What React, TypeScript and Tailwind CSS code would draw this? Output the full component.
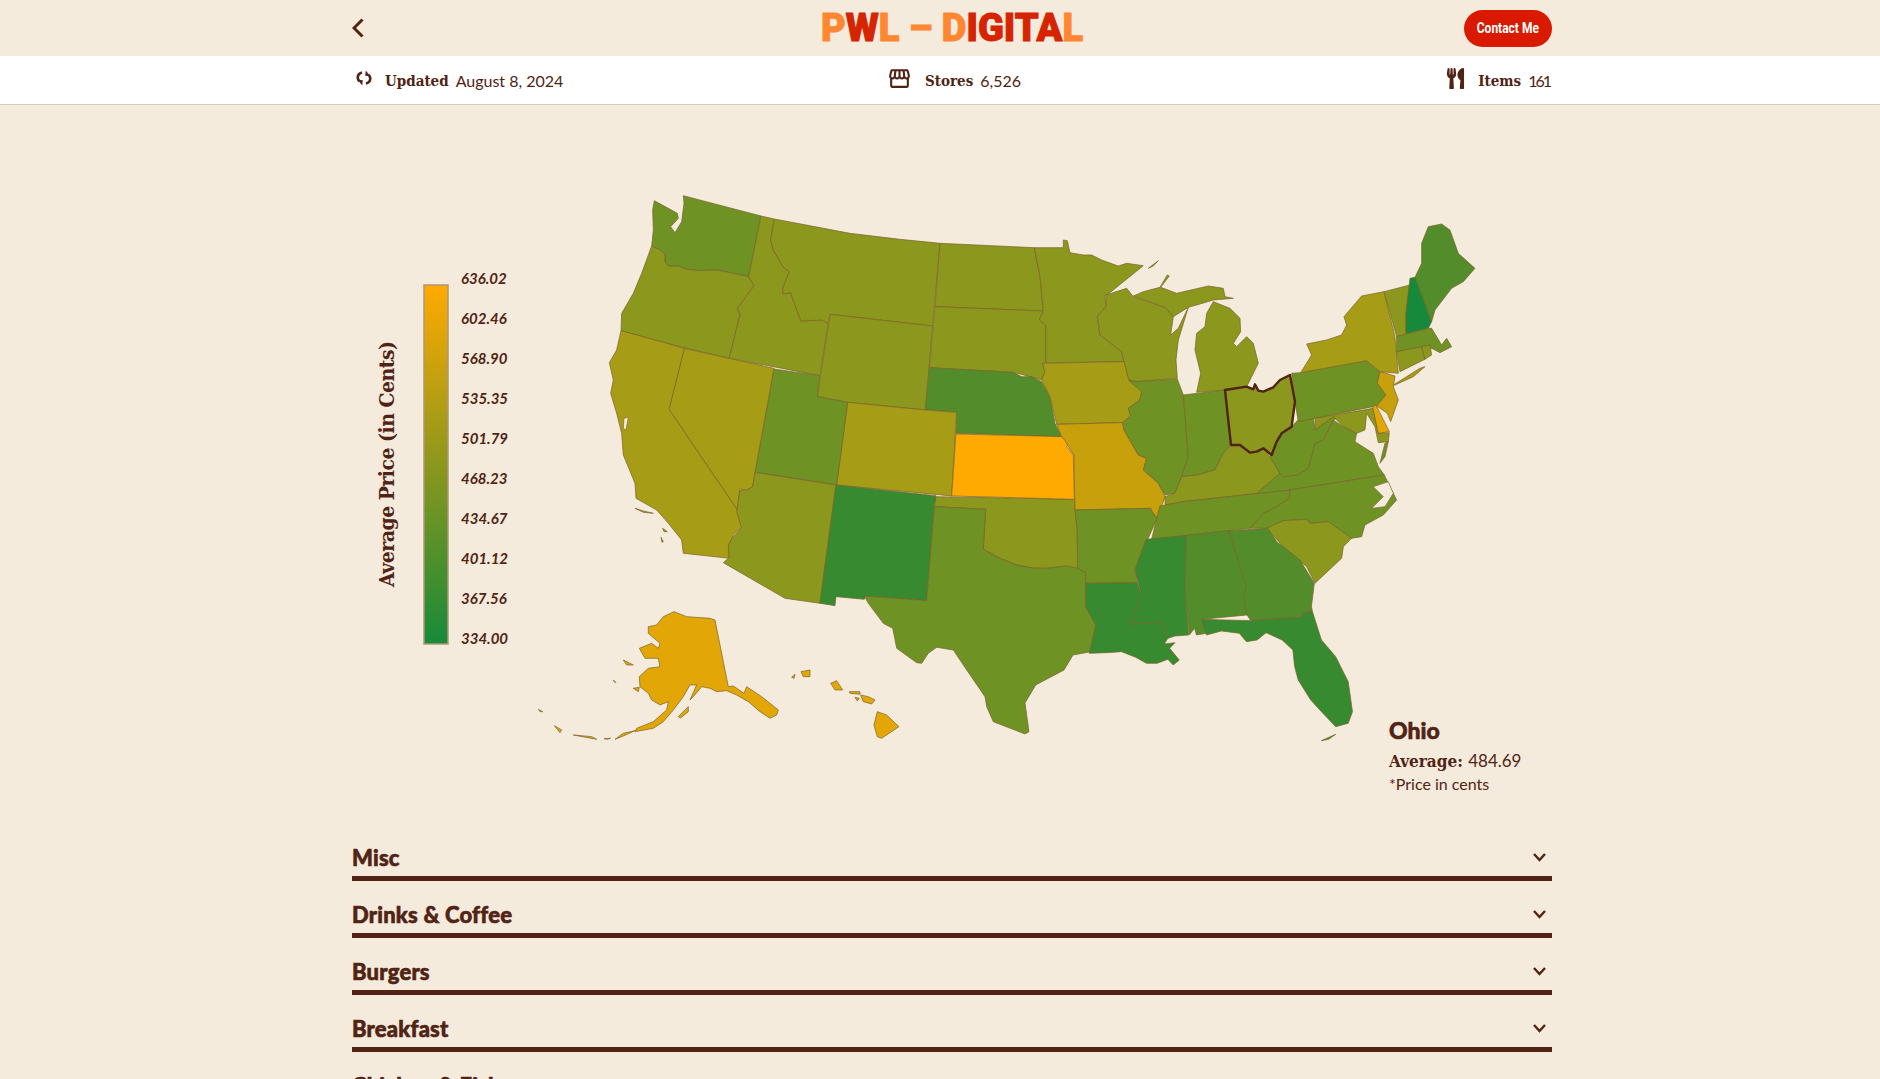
import React from "react";
import { FaUtensils } from "react-icons/fa";
import { MdOutlineStorefront } from "react-icons/md";

const BG = "#f5ebdc";
const C = {
  orange: "#ffaa00",
  amber: "#e2a707",
  gold: "#c7a00b",
  olive: "#a69c15",
  moss: "#8c971d",
  leaf: "#6e9224",
  green: "#538c2a",
  forest: "#378a30",
  teal: "#168a3a",
};

// each group holds outlines traced at its own scale, so they get their own transform
const west: [string, string][] = [
  [C.leaf, "250,47 483,108 446,290 400,280 350,270 300,272 260,268 235,258 205,258 195,245 195,222 178,208 155,198 160,150 158,90 163,62 205,85 232,100 235,115 212,140 225,158 245,125 252,70"],
  [C.moss, "155,198 178,208 195,222 195,245 205,258 235,258 260,268 300,272 350,270 400,280 446,290 462,318 412,385 420,403 388,535 250,503 63,452 65,400 100,340 125,280"],
  [C.moss, "483,108 523,117 512,180 520,210 550,262 568,275 548,325 550,342 572,338 590,390 603,423 665,420 685,430 660,587 388,535 420,403 412,385 462,318 446,290"],
  [C.moss, "523,117 750,160 900,178 1020,190 998,438 690,403 685,430 665,420 603,423 590,390 572,338 550,342 548,325 568,275 550,262 520,210 512,180"],
  [C.moss, "690,403 998,438 976,690 743,667 652,650"],
  [C.moss, "1020,190 1303,203 1310,240 1320,290 1330,393 1005,380"],
  [C.moss, "1005,380 1330,393 1318,420 1337,435 1337,548 1328,550 1335,575 1325,600 1290,590 1240,577 988,563"],
  [C.green, "988,563 1240,577 1265,590 1295,590 1325,605 1350,650 1365,730 1385,770 1068,760 1070,697 976,690"],
  [C.olive, "743,667 976,690 1070,697 1055,948 710,915"],
  [C.leaf, "522,567 660,587 652,650 743,667 710,915 465,877"],
  [C.olive, "253,505 522,565 465,877 458,920 440,935 420,925 412,990 207,688"],
  [C.olive, "63,452 253,505 207,688 412,990 428,1040 400,1065 385,1100 388,1135 250,1120 245,1080 205,1030 170,990 108,955 105,910 70,825 65,760 50,700 32,640 40,600 28,548 50,510"],
  [C.olive, "105,985 130,993 160,1000 130,997"],
  [C.olive, "188,1045 202,1055 192,1055"],
  [C.olive, "183,1072 190,1085 186,1087"],
  [BG, "72,715 85,712 78,750 70,745"],
  [C.moss, "1007,950 1423,958 1432,1040 1433,1170 1400,1158 1340,1165 1300,1165 1250,1155 1200,1135 1150,1108 1157,988 1005,980"],
  [C.orange, "1068,762 1385,770 1408,790 1400,800 1420,825 1423,958 1055,948"],
];

const east: [string, string][] = [
  [C.moss, "-47,143 40,143 40,120 52,122 60,158 100,165 125,165 155,180 205,198 230,190 280,197 175,282 165,285 168,320 142,350 150,405 215,455 222,485 -13,488 -13,375 -32,360 -20,333 -30,230 -40,180"],
  [C.moss, "295,205 325,182 310,198"],
  [C.moss, "168,285 230,265 250,290 345,322 370,350 362,405 385,385 415,322 385,420 378,480 382,535 258,545 235,540 222,485 215,455 150,405 142,350 168,320"],
  [C.moss, "250,288 280,275 330,262 352,225 358,228 332,262 380,280 475,258 520,265 525,290 550,295 490,300 440,315 415,322 370,350 345,322"],
  [C.moss, "490,305 540,325 570,355 572,395 550,430 560,440 590,410 610,430 625,490 605,530 590,560 525,570 440,577 452,520 435,450 440,400 465,380 470,340"],
  [C.olive, "-22,490 222,485 235,535 275,575 270,600 235,625 242,648 218,668 20,673 0,590 -25,540 -15,515"],
  [C.gold, "20,673 218,668 222,690 265,765 290,775 280,810 325,850 345,890 325,950 290,952 305,925 75,930 72,765 55,740 45,722 35,710"],
  [C.leaf, "258,545 382,537 400,585 415,770 395,830 375,880 345,885 325,850 280,810 290,775 265,765 222,690 218,668 242,648 235,625 270,600 275,575 235,540"],
  [C.leaf, "400,585 525,570 543,735 520,760 495,810 440,825 395,830 415,770"],
  [C.moss, "345,890 375,880 395,830 440,825 495,810 520,760 545,735 570,735 600,758 640,745 660,770 690,820 620,881 400,905 345,915"],
  [C.leaf, "330,918 400,905 720,870 718,895 680,920 640,940 600,985 305,1018 320,955"],
  [C.leaf, "620,881 690,820 700,830 745,825 775,805 795,730 820,720 850,660 880,680 920,700 915,725 970,760 985,800 1003,825 720,870"],
  [C.leaf, "990,790 1005,730 1015,725 1005,770"],
  [C.leaf, "660,770 680,725 695,700 725,680 742,662 790,655 795,690 850,650 870,650 850,660 820,720 795,730 775,805 745,825 700,830 690,820"],
  [C.leaf, "1003,825 720,870 718,895 680,920 640,940 600,985 650,985 700,962 770,958 780,970 835,965 905,1015 935,1010 945,975 1000,945 1040,900 1020,860"],
  [BG, "970,860 1015,845 1030,880 1005,920 965,925 1000,890"],
  [C.moss, "650,985 700,962 770,958 780,970 835,965 905,1015 880,1040 875,1075 795,1150 770,1100 700,1040"],
  [C.leaf, "725,520 752,518 950,482 990,515 982,550 1008,585 980,618 745,665 735,605"],
  [C.olive, "752,518 785,465 770,432 830,420 875,405 890,375 882,350 935,288 1002,275 1035,410 1045,520 990,515 950,482"],
  [C.olive, "1030,555 1110,505 1125,500 1090,530 1035,555"],
  [C.gold, "990,515 1035,528 1030,560 1045,600 1022,665 1012,640 980,618 1008,585 982,550"],
  [C.moss, "795,655 970,625 985,700 1018,698 1015,725 985,728 975,680 950,640 945,690 920,700 880,680 850,650 795,690"],
  [C.amber, "968,620 978,615 1018,695 985,700"],
  [C.moss, "1002,275 1080,255 1068,340 1068,402 1040,410"],
  [C.green, "1095,232 1115,190 1115,130 1135,80 1175,72 1200,90 1225,160 1275,205 1240,245 1205,265 1155,330 1145,365"],
  [C.teal, "1080,235 1095,232 1145,365 1135,385 1068,402 1068,340"],
  [C.leaf, "1040,410 1135,385 1145,385 1175,435 1190,415 1205,440 1170,458 1145,445 1040,455"],
  [C.moss, "1040,455 1115,440 1125,478 1050,515"],
  [C.moss, "1115,440 1140,435 1145,465 1125,478"],
];

const ohio = "525,570 590,560 610,568 615,553 625,572 640,575 670,562 690,540 720,525 735,605 725,680 695,700 680,725 665,765 640,745 620,755 600,758 570,735 543,735";

const south: [string, string][] = [
  [C.leaf, "210,30 420,25 440,55 415,115 405,130 378,210 385,248 240,250 240,218 218,205 216,90"],
  [C.forest, "240,250 385,248 397,288 363,372 455,368 470,415 460,432 490,428 475,445 502,480 485,495 470,478 440,490 410,490 380,472 340,455 300,458 250,460 268,375 240,320"],
  [C.forest, "410,118 522,106 518,260 528,405 490,408 470,415 455,368 363,372 397,288 378,210 405,130"],
  [C.green, "522,106 640,92 690,260 682,290 692,345 565,358 578,400 550,405 545,385 530,405 518,260"],
  [C.green, "640,92 750,85 775,125 840,180 880,250 872,320 875,335 848,338 845,352 702,362 692,345 682,290 690,260"],
  [C.forest, "565,358 702,362 845,352 848,338 875,335 900,420 940,470 975,545 987,635 975,670 940,680 900,635 870,600 835,540 825,500 820,450 790,420 745,398 720,420 690,425 670,400 620,393 578,405"],
  [C.forest, "900,722 940,703 920,718"],
];

const islands: [string, string][] = [
  [C.moss, "705,-23 948,15 900,370 795,355 610,248 628,232 625,195 640,170 665,145 650,95 660,30 680,30 698,20"],
  [C.forest, "948,15 1248,47 1243,80 1220,362 1035,348 1033,358 948,350 945,377 900,370"],
  [C.amber, "462,395 500,410 570,415 585,420 625,620 640,618 672,640 680,620 725,650 775,690 770,705 750,715 720,695 685,665 650,645 620,632 590,635 570,625 545,620 520,650 510,660 530,615 510,615 490,650 460,690 430,725 400,745 345,755 350,745 400,725 440,690 445,665 420,675 395,660 385,640 360,620 358,590 385,565 420,560 415,535 375,535 358,505 395,490 415,505 420,490 385,460 385,440 410,435 430,410"],
  [C.amber, "475,710 505,680 505,695 480,715"],
  [C.amber, "345,752 310,768 285,778 310,760"],
  [C.amber, "160,765 230,778 215,770"],
  [C.amber, "252,776 272,775 262,778"],
  [C.amber, "103,737 125,750 120,758"],
  [C.amber, "55,688 68,695 60,695"],
  [C.amber, "310,540 340,555 320,555"],
  [C.amber, "340,625 358,622 355,635"],
  [C.amber, "280,600 288,608 283,606"],
  [C.amber, "1072,695 1100,705 1137,740 1085,775 1072,770 1062,735"],
  [C.amber, "1022,645 1045,650 1065,660 1055,672 1030,665"],
  [C.amber, "988,635 1020,635 1020,643 990,640"],
  [C.amber, "1005,652 1018,655 1012,663"],
  [C.amber, "932,610 950,602 968,630 945,630"],
  [C.amber, "843,575 870,570 870,590 850,590"],
  [C.amber, "815,592 825,583 822,595"],
];

const texas =
  "935,506.7 985.7,509.3 983.3,549.3 1000,558.3 1016.7,565 1033,568 1046.7,568.3 1066.7,566 1077.9,568.3 1085.7,572.7 1085.7,606.7 1095.7,625 1091,651.7 1073,655 1064,670 1035.7,685 1025,703 1029,731.7 1025,734 993.3,721.7 986.7,706.7 985,696.7 966.7,670 953.3,650 936.7,647.3 928.3,653.3 921.7,663.3 916.7,662.7 896.7,648.3 892.7,628.3 883.3,623.3 868.3,603.3 864.3,596 926.7,600.7 934.3,506.7";

const ticks = ["636.02", "602.46", "568.90", "535.35", "501.79", "468.23", "434.67", "401.12", "367.56", "334.00"];
const sections = ["Misc", "Drinks & Coffee", "Burgers", "Breakfast", "Chicken & Fish"];

function Shapes({ items }: { items: [string, string][] }) {
  return (
    <>
      {items.map(([fill, points], i) => (
        <polygon
          key={i}
          points={points}
          fill={fill}
          stroke={fill === BG ? "#8a6d3a" : "#7a6128"}
          strokeWidth={0.7}
          strokeLinejoin="round"
          vectorEffect="non-scaling-stroke"
        />
      ))}
    </>
  );
}

function PriceMap() {
  return (
    <svg viewBox="352 105 1200 719" className="block w-[1200px] h-[719px]">
      <defs>
        <linearGradient id="scale" x1="0" y1="0" x2="0" y2="1">
          <stop offset="0%" stopColor="#ffaa00" />
          <stop offset="50%" stopColor="#8c971d" />
          <stop offset="100%" stopColor="#168a3a" />
        </linearGradient>
      </defs>

      {/* Legend */}
      <rect x="424" y="285" width="24" height="359" fill="url(#scale)" stroke="#b09678" strokeWidth="1.5" />
      {ticks.map((t, i) => (
        <text
          key={t}
          x="461"
          y={284 + i * 40}
          className="font-['Lato',sans-serif] font-bold italic text-[15px]"
          fill="#502314"
        >
          {t}
        </text>
      ))}
      <text
        transform="translate(394 464) rotate(-90)"
        textAnchor="middle"
        textLength={246}
        className="font-['DejaVu_Serif',serif] font-bold text-[21px] [font-stretch:condensed]"
        fill="#502314"
      >
        Average Price (in Cents)
      </text>

      {/* States */}
      <g transform="translate(600 180) scale(0.3333)">
        <Shapes items={west} />
      </g>
      <g transform="translate(520 480) scale(0.3333)">
        <Shapes items={islands} />
      </g>
      <polygon points={texas} fill={C.leaf} stroke="#7a6128" strokeWidth="0.7" />
      <g transform="translate(1050 200) scale(0.3333)">
        <Shapes items={east} />
      </g>
      <g transform="translate(1000 500) scale(0.35714 0.3333)">
        <Shapes items={south} />
      </g>
      <g transform="translate(1050 200) scale(0.3333)">
        <polygon
          points={ohio}
          fill={C.moss}
          stroke="#502314"
          strokeWidth={2.4}
          strokeLinejoin="round"
          vectorEffect="non-scaling-stroke"
        />
      </g>
    </svg>
  );
}

function RefreshGlyph() {
  return (
    <svg viewBox="0 0 16 16" className="w-[16px] h-[16px]" fill="none" stroke="currentColor" strokeWidth="2.6">
      <path d="M6 2.500C3 3.300 1.500 5.500 1.800 8.300c.2 1.300.8 2.300 1.800 3" />
      <path d="M1.800 9.800l5 .4-.6 5.200z" fill="currentColor" stroke="none" />
      <path d="M10 13.500c3-.8 4.500-3 4.200-5.800-.2-1.300-.8-2.300-1.800-3" />
      <path d="M14.200 6.200l-5-.4.6-5.200z" fill="currentColor" stroke="none" />
    </svg>
  );
}

function Stat({
  icon,
  label,
  value,
  className,
  valueClass,
}: {
  icon: React.ReactNode;
  label: string;
  value: string;
  className?: string;
  valueClass?: string;
}) {
  return (
    <div className={`flex items-center gap-[13px] ${className ?? ""}`}>
      <span className="-mt-[6px] flex">{icon}</span>
      <span className="font-['DejaVu_Serif',serif] font-bold text-[15px] [font-stretch:condensed]">{label}</span>
      <span className={`-ml-[6px] font-['Lato',sans-serif] text-[16px] ${valueClass ?? ""}`}>{value}</span>
    </div>
  );
}

function SectionRow({ title }: { title: string }) {
  return (
    <div className="h-[57px] border-b-[5px] border-[#502314] flex items-center justify-between pt-[14px]">
      <span className="font-['Lato',sans-serif] font-black text-[22px] tracking-[0.2px] [-webkit-text-stroke:0.6px]">{title}</span>
      <svg viewBox="0 0 13 9" className="w-[13px] h-[9px] mr-[6px]" fill="none" stroke="#502314" strokeWidth="2.4">
        <path d="M1 1l5.500 6 5.500-6" />
      </svg>
    </div>
  );
}

export default function App() {
  return (
    <div className="min-h-screen bg-[#f5ebdc] text-[#502314]">
      {/* Top bar */}
      <header className="h-14 ml-[352px] w-[1200px] grid grid-cols-[1fr_auto_1fr] items-center">
        <svg viewBox="0 0 12 20" className="w-[12px] h-[20px]" fill="none" stroke="#502314" strokeWidth="3">
          <path d="M10.500 1.500L2 10l8.500 8.500" />
        </svg>
        <h1 className="font-['Roboto',sans-serif] font-black text-[38px] leading-none text-[#ff8732] [-webkit-text-stroke:1px]">
          P<span className="text-[#d62300]">W</span>L – D<span className="text-[#d62300]">IGITA</span>L
        </h1>
        <button className="justify-self-end w-[88px] h-[37px] rounded-full bg-[#d91a00] text-white font-['Roboto',sans-serif] font-bold text-[15px]">
          <span className="inline-block scale-x-[0.8]">Contact Me</span>
        </button>
      </header>

      {/* Stats */}
      <div className="h-[49px] bg-white border-b border-[#d6cabb]">
        <div className="ml-[352px] w-[1200px] h-full grid grid-cols-[1fr_auto_1fr] items-center pl-[4px] pt-[2px]">
          <Stat icon={<RefreshGlyph />} label="Updated" value="August 8, 2024" />
          <Stat icon={<MdOutlineStorefront className="w-[25px] h-[25px]" />} label="Stores" value="6,526" />
          <Stat
            icon={<FaUtensils className="w-[19px] h-[21px]" />}
            label="Items"
            value="161"
            className="justify-self-end"
            valueClass="tracking-[-2px] pr-[2px]"
          />
        </div>
      </div>

      <main className="ml-[352px] w-[1200px]">
        <section className="relative">
          <PriceMap />
          <div className="absolute left-[1037px] top-[610px]">
            <div className="font-['Lato',sans-serif] font-black text-[23px] leading-[30px] [-webkit-text-stroke:0.6px]">Ohio</div>
            <div className="mt-[2px] leading-[28px]">
              <span className="font-['DejaVu_Serif',serif] font-bold text-[17px] [font-stretch:condensed]">Average: </span>
              <span className="font-['Lato',sans-serif] text-[17px]">484.69</span>
            </div>
            <div className="font-['Lato',sans-serif] text-[16px] leading-[18px]">*Price in cents</div>
          </div>
        </section>

        {sections.map((s) => (
          <SectionRow key={s} title={s} />
        ))}
      </main>
    </div>
  );
}
